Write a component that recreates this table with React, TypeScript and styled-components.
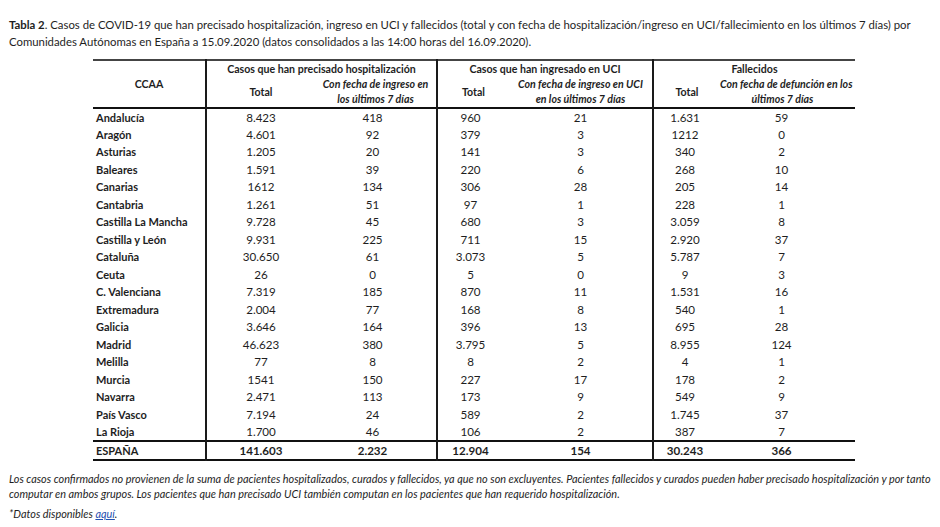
import React from "react";
import styled, { createGlobalStyle } from "styled-components";

const Global = createGlobalStyle`
  html, body { margin: 0; padding: 0; background: #fff; }
  body { font-family: Lato, "Open Sans", sans-serif; color: #1e1e1e; }
`;

const Page = styled.div`
  width: 940px;
  height: 527px;
  overflow: hidden;
  padding: 16px 0 0 9px;
  box-sizing: border-box;
`;

const Title = styled.p`
  margin: 0;
  font-size: 11.35px;
  line-height: 17px;
  white-space: nowrap;
  strong { font-weight: 700; }
`;

const TableWrap = styled.div`
  margin: 9px 0 0 84px;
`;

const Table = styled.table`
  border-collapse: collapse;
  table-layout: fixed;
  width: 762px;
  font-size: 11.6px;
  border-top: 2px solid #444;
  border-bottom: 2px solid #111;
`;

const Th = styled.th<{ $divider?: boolean; $italic?: boolean; $h?: number; $shift?: number }>`
  font-size: 10.6px;
  font-weight: 700;
  font-style: ${(p) => (p.$italic ? "italic" : "normal")};
  text-align: center;
  vertical-align: middle;
  white-space: nowrap;
  padding: 0 ${(p) => p.$shift ?? 0}px 0 0;
  height: ${(p) => p.$h ?? 15}px;
  line-height: 15px;
  border-left: ${(p) => (p.$divider ? "2px solid #1a1a1a" : "none")};
`;

const HeadRow = styled.tr<{ $bottom?: boolean }>`
  border-bottom: ${(p) => (p.$bottom ? "2px solid #111" : "none")};
`;

const Row = styled.tr<{ $total?: boolean }>`
  height: ${(p) => (p.$total ? 19 : 17.5)}px;
  font-weight: ${(p) => (p.$total ? 700 : 400)};
  border-top: ${(p) => (p.$total ? "2px solid #111" : "none")};
`;

const Name = styled.td`
  font-size: 11px;
  font-weight: 700;
  text-align: left;
  padding: 0 0 0 3px;
  white-space: nowrap;
`;

const Num = styled.td<{ $divider?: boolean; $shift?: number }>`
  text-align: center;
  padding: 0;
  padding-right: ${(p) => (p.$shift ? p.$shift : 0)}px;
  border-left: ${(p) => (p.$divider ? "2px solid #1a1a1a" : "none")};
`;

const Notes = styled.div`
  margin-top: 10px;
  font-size: 10.9px;
  font-style: italic;
  line-height: 15px;
  white-space: nowrap;
`;

const Note = styled.p<{ $gap?: number }>`
  margin: ${(p) => p.$gap ?? 0}px 0 0 0;
`;

const Link = styled.a`
  color: #1f4fb0;
  text-decoration: underline;
`;

type R = [string, string, string, string, string, string, string];

const rows: R[] = [
  ["Andalucía", "8.423", "418", "960", "21", "1.631", "59"],
  ["Aragón", "4.601", "92", "379", "3", "1212", "0"],
  ["Asturias", "1.205", "20", "141", "3", "340", "2"],
  ["Baleares", "1.591", "39", "220", "6", "268", "10"],
  ["Canarias", "1612", "134", "306", "28", "205", "14"],
  ["Cantabria", "1.261", "51", "97", "1", "228", "1"],
  ["Castilla La Mancha", "9.728", "45", "680", "3", "3.059", "8"],
  ["Castilla y León", "9.931", "225", "711", "15", "2.920", "37"],
  ["Cataluña", "30.650", "61", "3.073", "5", "5.787", "7"],
  ["Ceuta", "26", "0", "5", "0", "9", "3"],
  ["C. Valenciana", "7.319", "185", "870", "11", "1.531", "16"],
  ["Extremadura", "2.004", "77", "168", "8", "540", "1"],
  ["Galicia", "3.646", "164", "396", "13", "695", "28"],
  ["Madrid", "46.623", "380", "3.795", "5", "8.955", "124"],
  ["Melilla", "77", "8", "8", "2", "4", "1"],
  ["Murcia", "1541", "150", "227", "17", "178", "2"],
  ["Navarra", "2.471", "113", "173", "9", "549", "9"],
  ["País Vasco", "7.194", "24", "589", "2", "1.745", "37"],
  ["La Rioja", "1.700", "46", "106", "2", "387", "7"],
];

const total: R = ["ESPAÑA", "141.603", "2.232", "12.904", "154", "30.243", "366"];

const DataRow = ({ r, isTotal }: { r: R; isTotal?: boolean }) => (
  <Row $total={isTotal}>
    <Name>{r[0]}</Name>
    <Num $divider>{r[1]}</Num>
    <Num $shift={6}>{r[2]}</Num>
    <Num $divider $shift={6}>{r[3]}</Num>
    <Num>{r[4]}</Num>
    <Num $divider $shift={4}>{r[5]}</Num>
    <Num $shift={12}>{r[6]}</Num>
  </Row>
);

export default function App() {
  return (
    <Page>
      <Global />
      <Title>
        <strong>Tabla 2</strong>. Casos de COVID-19 que han precisado hospitalización, ingreso en UCI y fallecidos (total y con fecha de hospitalización/ingreso en UCI/fallecimiento en los últimos 7 días) por
        <br />
        Comunidades Autónomas en España a 15.09.2020 (datos consolidados a las 14:00 horas del 16.09.2020).
      </Title>
      <TableWrap>
        <Table>
          <colgroup>
            <col style={{ width: 113 }} />
            <col style={{ width: 109 }} />
            <col style={{ width: 122 }} />
            <col style={{ width: 72 }} />
            <col style={{ width: 144 }} />
            <col style={{ width: 67 }} />
            <col style={{ width: 135 }} />
          </colgroup>
          <thead>
            <HeadRow>
              <Th rowSpan={2}>CCAA</Th>
              <Th colSpan={2} $divider $h={16}>Casos que han precisado hospitalización</Th>
              <Th colSpan={2} $divider $h={16}>Casos que han ingresado en UCI</Th>
              <Th colSpan={2} $divider $h={16}>Fallecidos</Th>
            </HeadRow>
            <HeadRow $bottom>
              <Th $divider $h={30}>Total</Th>
              <Th $italic $h={30}>Con fecha de ingreso en<br />los últimos 7 días</Th>
              <Th $divider $h={30}>Total</Th>
              <Th $italic $h={30}>Con fecha de ingreso en UCI<br />en los últimos 7 días</Th>
              <Th $divider $h={30}>Total</Th>
              <Th $italic $h={30} $shift={10}>Con fecha de defunción en los<br />últimos 7 días</Th>
            </HeadRow>
          </thead>
          <tbody>
            {rows.map((r) => (
              <DataRow key={r[0]} r={r} />
            ))}
            <DataRow r={total} isTotal />
          </tbody>
        </Table>
      </TableWrap>
      <Notes>
        <Note>
          Los casos confirmados no provienen de la suma de pacientes hospitalizados, curados y fallecidos, ya que no son excluyentes. Pacientes fallecidos y curados pueden haber precisado hospitalización y por tanto
          <br />
          computar en ambos grupos. Los pacientes que han precisado UCI también computan en los pacientes que han requerido hospitalización.
        </Note>
        <Note $gap={5}>
          *Datos disponibles <Link href="#">aquí</Link>.
        </Note>
      </Notes>
    </Page>
  );
}
